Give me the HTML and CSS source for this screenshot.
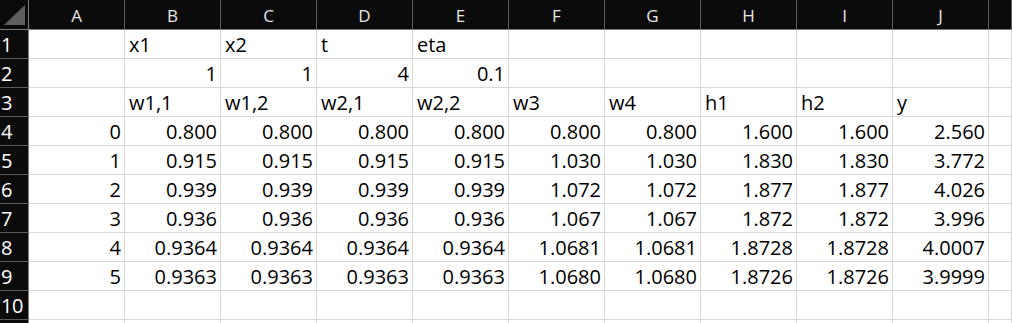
FILE: index.html
```html
<!DOCTYPE html>
<html lang="en">
<head>
    <meta charset="UTF-8">
    <title>Sheet1</title>
    <link rel="stylesheet" href="styles.css">
</head>
<body>
    <div class="sheet">
        <div class="row head">
            <div class="corner">
                <svg width="28" height="29" viewBox="0 0 28 29"><polygon points="4,25 25,25 25,5" fill="#5e5e5e"/></svg>
            </div>
            <div class="col">A</div><div class="col">B</div><div class="col">C</div><div class="col">D</div><div class="col">E</div>
            <div class="col">F</div><div class="col">G</div><div class="col">H</div><div class="col">I</div><div class="col">J</div>
            <div class="col"></div>
        </div>

        <div class="row">
            <div class="rh">1</div>
            <div class="cell"></div><div class="cell">x1</div><div class="cell">x2</div><div class="cell">t</div><div class="cell">eta</div>
            <div class="cell"></div><div class="cell"></div><div class="cell"></div><div class="cell"></div><div class="cell"></div><div class="cell"></div>
        </div>
        <div class="row">
            <div class="rh">2</div>
            <div class="cell"></div><div class="cell num">1</div><div class="cell num">1</div><div class="cell num">4</div><div class="cell num">0.1</div>
            <div class="cell"></div><div class="cell"></div><div class="cell"></div><div class="cell"></div><div class="cell"></div><div class="cell"></div>
        </div>
        <div class="row">
            <div class="rh">3</div>
            <div class="cell"></div><div class="cell">w1,1</div><div class="cell">w1,2</div><div class="cell">w2,1</div><div class="cell">w2,2</div>
            <div class="cell">w3</div><div class="cell">w4</div><div class="cell">h1</div><div class="cell">h2</div><div class="cell">y</div><div class="cell"></div>
        </div>
        <div class="row">
            <div class="rh">4</div>
            <div class="cell num">0</div><div class="cell num">0.800</div><div class="cell num">0.800</div><div class="cell num">0.800</div><div class="cell num">0.800</div>
            <div class="cell num">0.800</div><div class="cell num">0.800</div><div class="cell num">1.600</div><div class="cell num">1.600</div><div class="cell num">2.560</div><div class="cell"></div>
        </div>
        <div class="row">
            <div class="rh">5</div>
            <div class="cell num">1</div><div class="cell num">0.915</div><div class="cell num">0.915</div><div class="cell num">0.915</div><div class="cell num">0.915</div>
            <div class="cell num">1.030</div><div class="cell num">1.030</div><div class="cell num">1.830</div><div class="cell num">1.830</div><div class="cell num">3.772</div><div class="cell"></div>
        </div>
        <div class="row">
            <div class="rh">6</div>
            <div class="cell num">2</div><div class="cell num">0.939</div><div class="cell num">0.939</div><div class="cell num">0.939</div><div class="cell num">0.939</div>
            <div class="cell num">1.072</div><div class="cell num">1.072</div><div class="cell num">1.877</div><div class="cell num">1.877</div><div class="cell num">4.026</div><div class="cell"></div>
        </div>
        <div class="row">
            <div class="rh">7</div>
            <div class="cell num">3</div><div class="cell num">0.936</div><div class="cell num">0.936</div><div class="cell num">0.936</div><div class="cell num">0.936</div>
            <div class="cell num">1.067</div><div class="cell num">1.067</div><div class="cell num">1.872</div><div class="cell num">1.872</div><div class="cell num">3.996</div><div class="cell"></div>
        </div>
        <div class="row">
            <div class="rh">8</div>
            <div class="cell num">4</div><div class="cell num">0.9364</div><div class="cell num">0.9364</div><div class="cell num">0.9364</div><div class="cell num">0.9364</div>
            <div class="cell num">1.0681</div><div class="cell num">1.0681</div><div class="cell num">1.8728</div><div class="cell num">1.8728</div><div class="cell num">4.0007</div><div class="cell"></div>
        </div>
        <div class="row">
            <div class="rh">9</div>
            <div class="cell num">5</div><div class="cell num">0.9363</div><div class="cell num">0.9363</div><div class="cell num">0.9363</div><div class="cell num">0.9363</div>
            <div class="cell num">1.0680</div><div class="cell num">1.0680</div><div class="cell num">1.8726</div><div class="cell num">1.8726</div><div class="cell num">3.9999</div><div class="cell"></div>
        </div>
        <div class="row">
            <div class="rh">10</div>
            <div class="cell"></div><div class="cell"></div><div class="cell"></div><div class="cell"></div><div class="cell"></div>
            <div class="cell"></div><div class="cell"></div><div class="cell"></div><div class="cell"></div><div class="cell"></div><div class="cell"></div>
        </div>
        <!-- row 11 only peeks in at the bottom edge -->
        <div class="row">
            <div class="rh"></div>
            <div class="cell"></div><div class="cell"></div><div class="cell"></div><div class="cell"></div><div class="cell"></div>
            <div class="cell"></div><div class="cell"></div><div class="cell"></div><div class="cell"></div><div class="cell"></div><div class="cell"></div>
        </div>
    </div>
</body>
</html>
```

FILE: styles.css
```css
html, body {
    margin: 0;
    padding: 0;
    background-color: #ffffff;
    overflow: hidden;
}
.sheet {
    width: 1012px;
    height: 323px;
    overflow: hidden;
    font-family: 'Open Sans', 'Liberation Sans', sans-serif;
}
.row {
    display: grid;
    grid-template-columns: 29px repeat(10, 96px) 1fr;
    height: 29px;
}
.row.head {
    height: 30px;
    background-color: #0b0b0b;
    border-bottom: 1px solid #7c7c7c;
    box-sizing: border-box;
}
.corner {
    border-right: 1px solid #7c7c7c;
    box-sizing: border-box;
}
.corner svg {
    display: block;
}
.col {
    color: #e6e6e6;
    font-size: 17px;
    line-height: 26px;
    padding-top: 3px;
    text-align: center;
    border-right: 1px solid #5c5c5c;
    box-sizing: border-box;
}
.rh {
    background-color: #0b0b0b;
    color: #ffffff;
    font-size: 20px;
    line-height: 26px;
    padding: 2px 0 0 1px;
    border-right: 1px solid #7c7c7c;
    border-bottom: 1px solid #5a5a5a;
    box-sizing: border-box;
    letter-spacing: -0.5px;
}
.cell {
    color: #000000;
    font-size: 20px;
    line-height: 26px;
    padding: 2px 3px 0 4px;
    border-right: 1px solid #d9d9d9;
    border-bottom: 1px solid #d9d9d9;
    box-sizing: border-box;
    white-space: nowrap;
    overflow: hidden;
}
.num {
    text-align: right;
}
```
